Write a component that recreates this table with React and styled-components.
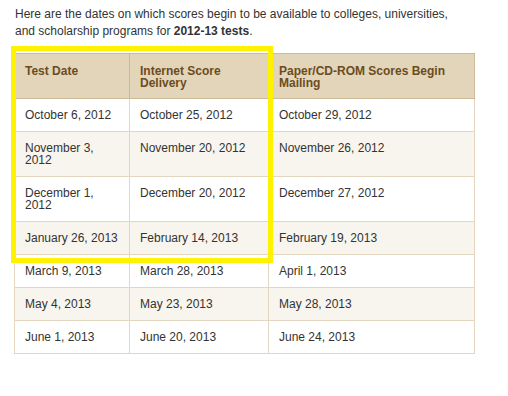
import React from 'react';
import styled, { createGlobalStyle } from 'styled-components';

const GlobalStyle = createGlobalStyle`
  body {
    margin: 0;
    background: #fff;
    font-family: "Liberation Sans", Arial, sans-serif;
  }
`;

const Page = styled.div`
  padding: 6px 14px 0 14px;
  width: 460px;
  color: #333;
  font-size: 12px;
`;

const Intro = styled.p`
  margin: 0 0 13px 1px;
  max-width: 450px;
  line-height: 17px;
  color: #333;
`;

const TableWrap = styled.div`
  position: relative;
`;

const Table = styled.table`
  width: 460px;
  border-collapse: collapse;
  table-layout: fixed;
  font-size: 12px;
`;

const Th = styled.th`
  box-sizing: border-box;
  width: ${(p) => p.w}px;
  background: #e3d5b9;
  color: #6b4c1f;
  font-weight: bold;
  text-align: left;
  vertical-align: top;
  line-height: 12px;
  padding: 11px 10px 9px 10px;
  border: 1px solid #cdbb98;
`;

const Row = styled.tr`
  background: ${(p) => (p.striped ? '#f7f5ee' : '#fff')};
`;

const Td = styled.td`
  color: #333;
  vertical-align: top;
  line-height: 12px;
  padding: 10px;
  border: 1px solid #e3d7c1;
`;

const Highlight = styled.div`
  position: absolute;
  left: -3px;
  top: -7px;
  width: 252px;
  height: 207px;
  border: 5px solid #fff200;
  pointer-events: none;
`;

const rows = [
  ['October 6, 2012', 'October 25, 2012', 'October 29, 2012'],
  ['November 3, 2012', 'November 20, 2012', 'November 26, 2012'],
  ['December 1, 2012', 'December 20, 2012', 'December 27, 2012'],
  ['January 26, 2013', 'February 14, 2013', 'February 19, 2013'],
  ['March 9, 2013', 'March 28, 2013', 'April 1, 2013'],
  ['May 4, 2013', 'May 23, 2013', 'May 28, 2013'],
  ['June 1, 2013', 'June 20, 2013', 'June 24, 2013'],
];

const App = () => {
  return (
    <>
      <GlobalStyle />
      <Page>
        <Intro>
          Here are the dates on which scores begin to be available to colleges, universities,
          and scholarship programs for <b>2012-13 tests</b>.
        </Intro>
        <TableWrap>
          <Table>
            <thead>
              <tr>
                <Th w={115}>Test Date</Th>
                <Th w={139}>Internet Score Delivery</Th>
                <Th w={206}>Paper/CD-ROM Scores Begin Mailing</Th>
              </tr>
            </thead>
            <tbody>
              {rows.map((r, i) => (
                <Row key={r[0]} striped={i % 2 === 1}>
                  {r.map((c) => (
                    <Td key={c}>{c}</Td>
                  ))}
                </Row>
              ))}
            </tbody>
          </Table>
          <Highlight />
        </TableWrap>
      </Page>
    </>
  );
};

export default App;
